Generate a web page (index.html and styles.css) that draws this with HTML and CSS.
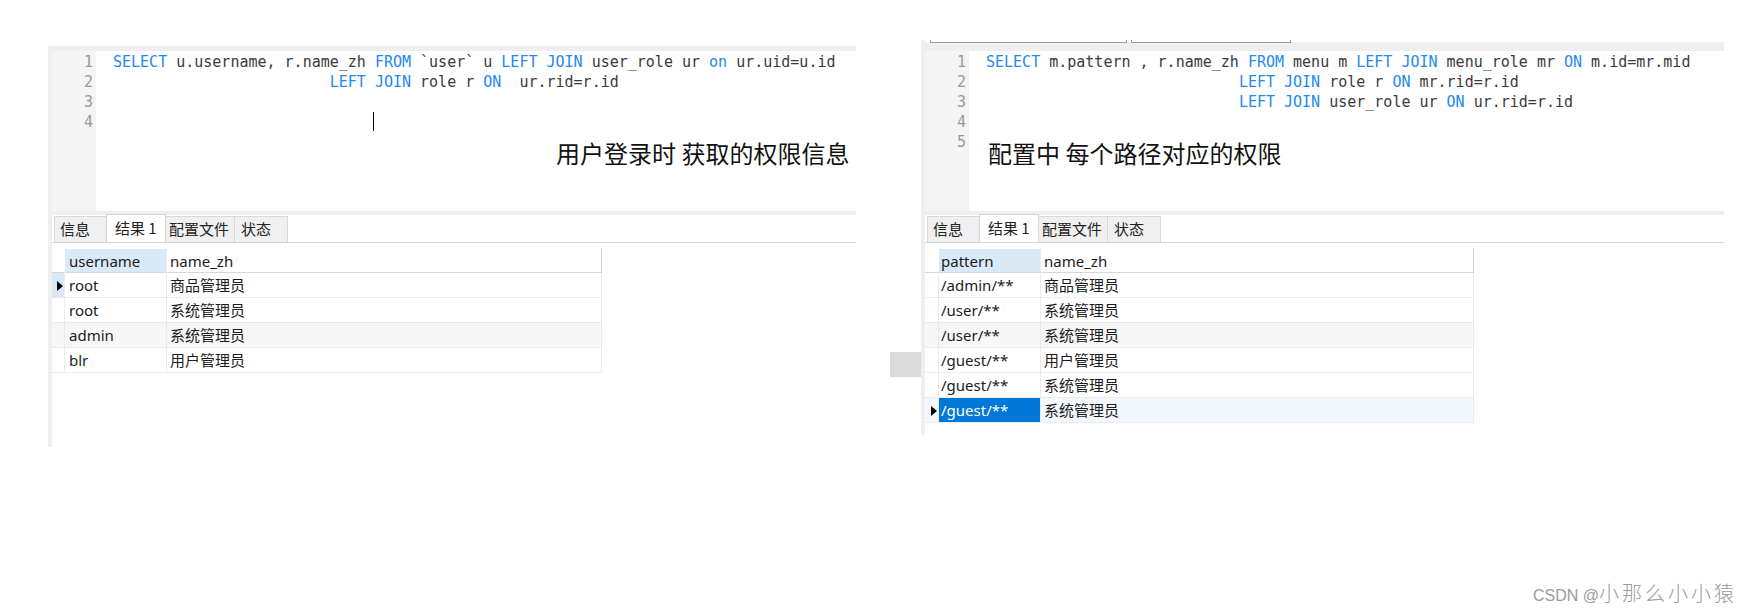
FILE: index.html
```html
<!DOCTYPE html>
<html lang="zh">
<head>
<meta charset="utf-8">
<title>SQL</title>
<link rel="stylesheet" href="styles.css">
</head>
<body>
<div class="page">
  <section class="panel panel-left">
    <div class="editor">
      <div class="gutter"><div>1</div><div>2</div><div>3</div><div>4</div></div>
      <div class="code">
        <div class="ln"><span class="kw">SELECT</span> u.username, r.name_zh <span class="kw">FROM</span> `user` u <span class="kw">LEFT</span> <span class="kw">JOIN</span> user_role ur <span class="kw">on</span> ur.uid=u.id</div>
        <div class="ln">                        <span class="kw">LEFT</span> <span class="kw">JOIN</span> role r <span class="kw">ON</span>  ur.rid=r.id</div>
        <div class="ln"> </div>
        <div class="ln"><span class="cursor"></span></div>
        <div class="note note-left">用户登录时 获取的权限信息</div>
      </div>
    </div>
    <div class="tabs">
      <div class="tab t-info">信息</div>
      <div class="tab t-res active">结果 1</div>
      <div class="tab t-cfg">配置文件</div>
      <div class="tab t-st">状态</div>
    </div>
    <div class="grid grid-left">
      <div class="c ind hd"></div><div class="c c1 hd sel-col">username</div><div class="c c2 hd">name_zh</div>
      <div class="c ind cur"><span class="tri"></span></div><div class="c c1">root</div><div class="c c2">商品管理员</div>
      <div class="c ind"></div><div class="c c1">root</div><div class="c c2">系统管理员</div>
      <div class="c ind alt"></div><div class="c c1 alt">admin</div><div class="c c2 alt">系统管理员</div>
      <div class="c ind"></div><div class="c c1">blr</div><div class="c c2">用户管理员</div>
    </div>
  </section>

  <div class="splitter"></div>

  <section class="panel panel-right">
    <div class="toolbar"><span class="box box-a"></span><span class="box box-b"></span></div>
    <div class="editor">
      <div class="gutter"><div>1</div><div>2</div><div>3</div><div>4</div><div>5</div></div>
      <div class="code">
        <div class="ln"><span class="kw">SELECT</span> m.pattern , r.name_zh <span class="kw">FROM</span> menu m <span class="kw">LEFT</span> <span class="kw">JOIN</span> menu_role mr <span class="kw">ON</span> m.id=mr.mid</div>
        <div class="ln">                            <span class="kw">LEFT</span> <span class="kw">JOIN</span> role r <span class="kw">ON</span> mr.rid=r.id</div>
        <div class="ln">                            <span class="kw">LEFT</span> <span class="kw">JOIN</span> user_role ur <span class="kw">ON</span> ur.rid=r.id</div>
        <div class="ln"> </div>
        <div class="note note-right">配置中 每个路径对应的权限</div>
      </div>
    </div>
    <div class="tabs">
      <div class="tab t-info">信息</div>
      <div class="tab t-res active">结果 1</div>
      <div class="tab t-cfg">配置文件</div>
      <div class="tab t-st">状态</div>
    </div>
    <div class="grid grid-right">
      <div class="c ind hd"></div><div class="c c1 hd sel-col">pattern</div><div class="c c2 hd">name_zh</div>
      <div class="c ind"></div><div class="c c1">/admin/**</div><div class="c c2">商品管理员</div>
      <div class="c ind"></div><div class="c c1">/user/**</div><div class="c c2">系统管理员</div>
      <div class="c ind alt"></div><div class="c c1 alt">/user/**</div><div class="c c2 alt">系统管理员</div>
      <div class="c ind"></div><div class="c c1">/guest/**</div><div class="c c2">用户管理员</div>
      <div class="c ind"></div><div class="c c1">/guest/**</div><div class="c c2">系统管理员</div>
      <div class="c ind selrow"><span class="tri"></span></div><div class="c c1 selcell">/guest/**</div><div class="c c2 selrow">系统管理员</div>
    </div>
  </section>
</div>
<div class="watermark">CSDN @<span class="wm-cjk">小那么小小猿</span></div>
</body>
</html>
```

FILE: styles.css
```css
* { box-sizing: border-box; }

html, body {
  margin: 0;
  background: #fff;
}

body {
  width: 1753px;
  height: 614px;
  overflow: hidden;
  font-family: "Noto Sans", "Noto Sans CJK SC", sans-serif;
  color: #1b1b1b;
}

.page {
  display: flex;
  align-items: flex-start;
}

.panel {
  display: flex;
  flex-direction: column;
  border-left: 4px solid #efefef;
}

.panel-left {
  margin-left: 48px;
  margin-top: 46px;
  width: 808px;
  height: 401px;
  border-top: 5px solid #efefef;
}

.panel-right {
  margin-top: 40px;
  width: 803px;
  height: 395px;
}

.toolbar {
  display: flex;
  height: 11px;
  padding-left: 5px;
  gap: 4px;
  background: linear-gradient(#fff 0, #fff 2px, #efefef 2px);
}

.box {
  display: block;
  height: 3px;
  background: #fff;
  border: 1px solid #9c9c9c;
  border-top: none;
}

.box-a { width: 197px; }
.box-b { width: 160px; }

.editor {
  display: flex;
  height: 164px;
  border-bottom: 4px solid #efefef;
}

.gutter {
  width: 44px;
  flex: none;
  background: #f4f4f4;
  padding-top: 1px;
  padding-right: 3px;
  text-align: right;
  font-family: "DejaVu Sans Mono", monospace;
  font-size: 15px;
  line-height: 20px;
  color: #9a9a9a;
}

.code {
  flex: 1;
  padding-top: 1px;
  padding-left: 17px;
  font-family: "DejaVu Sans Mono", monospace;
  font-size: 15px;
  line-height: 20px;
  color: #3a3a3a;
}

.ln {
  white-space: pre;
  height: 20px;
}

.kw { color: #2389f0; }

.cursor {
  display: inline-block;
  width: 1px;
  height: 19px;
  margin-left: 260px;
  vertical-align: top;
  background: #000;
}

.note {
  font-family: "Noto Sans CJK SC", sans-serif;
  font-size: 24px;
  line-height: 30px;
  color: #111;
  white-space: nowrap;
  margin-top: 6px;
}

.note-left { margin-left: 443px; }
.note-right { margin-left: 2px; }

.tabs {
  display: flex;
  align-items: flex-end;
  height: 28px;
  padding-left: 2px;
  border-bottom: 1px solid #d4d4d4;
}

.tab {
  height: 26px;
  background: #f0f0f0;
  border: 1px solid #d9d9d9;
  border-bottom: none;
  font-family: "Noto Sans CJK SC", sans-serif;
  font-size: 15px;
  line-height: 24px;
  padding-left: 5px;
  color: #222;
  white-space: nowrap;
}

.tab + .tab { margin-left: -1px; }

.tab.active {
  height: 28px;
  background: #fff;
  border-color: #d4d4d4;
  line-height: 25px;
  padding-left: 8px;
}

.t-info { width: 53px; }
.t-res { width: 60px; }
.t-cfg { width: 70px; padding-left: 3px; }
.t-st { width: 54px; padding-left: 6px; }

.grid {
  display: grid;
  margin-top: 6px;
}

.grid-left { grid-template-columns: 13px 102px 435px; }
.grid-right { grid-template-columns: 14px 102px 433px; }

.c {
  height: 25px;
  border-bottom: 1px solid #ebebeb;
  border-right: 1px solid #ebebeb;
  font-size: 15px;
  line-height: 25px;
  padding-left: 3px;
  white-space: nowrap;
  overflow: hidden;
  color: #1b1b1b;
}

.c.hd {
  height: 24px;
  line-height: 24px;
  border-bottom-color: #d7d7d7;
}

.c2.hd { border-right-color: #d0d0d0; }

.ind {
  padding-left: 5px;
  padding-top: 8px;
}

.ind.hd { background: #fff; border-right-color: #ffffff; }

.sel-col { background: #d9e9f7; }

.c1 { padding-left: 4px; }
.grid-right .c1 { padding-left: 2px; }

.alt { background: #f7f7f7; }

.cur { background: #d9e9f7; }

.selrow { background: #f2f8fd; }

.selcell {
  background: #0078d7;
  color: #fff;
}

.tri {
  display: block;
  width: 0;
  height: 0;
  border-left: 6px solid #000;
  border-top: 5px solid transparent;
  border-bottom: 5px solid transparent;
}

.grid-right .ind { padding-left: 6px; }

.splitter {
  width: 31px;
  height: 25px;
  margin-left: 34px;
  margin-top: 352px;
  background: #dadada;
}

.watermark {
  margin-top: 134px;
  padding-right: 16px;
  text-align: right;
  font-family: "Liberation Sans", Arial, sans-serif;
  font-size: 16px;
  line-height: 24px;
  color: #9b9b9b;
  text-shadow: 1px 1px 0 rgba(255, 255, 255, 0.8);
}

.wm-cjk {
  font-family: "Noto Sans CJK SC", sans-serif;
  font-size: 20px;
  letter-spacing: 3px;
  font-weight: 300;
}
```
